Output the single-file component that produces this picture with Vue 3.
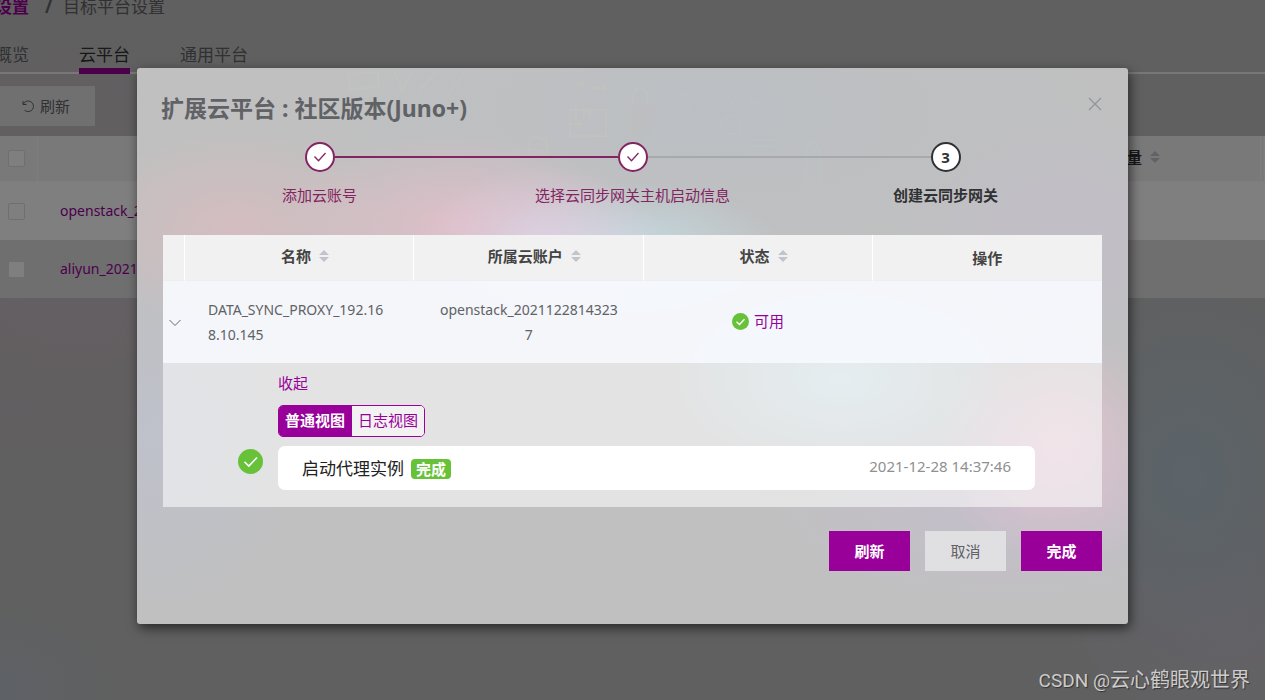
<script setup>
import { ref } from 'vue'

const tabs = ['概览', '云平台', '通用平台']
const platforms = ['openstack_20211228', 'aliyun_20211228']
const steps = [
  { title: '添加云账号', state: 'done' },
  { title: '选择云同步网关主机启动信息', state: 'last-done' },
  { title: '创建云同步网关', state: 'current' }
]
const view = ref('normal')
</script>

<template>
  <div class="app">
    <main class="page">
      <nav class="crumbs">
        <a href="#">设置</a><span class="slash">/</span><span>目标平台设置</span>
      </nav>
      <nav class="tabs">
        <a v-for="tab in tabs" :key="tab" href="#" :class="{ active: tab === '云平台' }">{{ tab }}</a>
      </nav>
      <button class="reload" type="button">
        <svg width="14" height="14" viewBox="0 0 14 14" fill="none" stroke="currentColor">
          <path d="M2 2v3.500h3.500M2.300 5.200A5.300 5.300 0 1 1 3.600 11.200" />
        </svg>
        刷新
      </button>
      <table class="list">
        <thead>
          <tr>
            <th class="pick"><input type="checkbox" aria-label="all" /></th>
            <th></th>
            <th class="amount">
              <span class="sortable">量
                <svg class="sort" width="10" height="12" viewBox="0 0 10 12"><path d="M0 5 5 0l5 5zM0 7h10l-5 5z" /></svg>
              </span>
            </th>
            <th class="edge"></th>
          </tr>
        </thead>
        <tbody>
          <tr v-for="name in platforms" :key="name">
            <td class="pick"><input type="checkbox" :aria-label="name" /></td>
            <td class="link"><a href="#">{{ name }}</a></td>
            <td></td>
            <td></td>
          </tr>
        </tbody>
      </table>
    </main>

    <div class="mask">
      <section class="dialog" role="dialog" aria-labelledby="dialog-title">
        <svg class="doodles" width="640" height="140" viewBox="0 0 640 140" fill="none" stroke-width="2">
          <g stroke="#c9c8bd">
            <path d="M0 4l30-2v14l-28 4zM46 0l8 20 10-18M70 22L90 0M100 24l18-22" />
            <path d="M226 14h10l-4-4m4 4-4 4M246 18h12l-4-4m4 4-4 4M222 40h36v26h-36zM228 34v18M236 48v-10l6 10V38M222 54h12l-4-4m4 4-4 4" />
            <path d="M182 66l17 4v12l-18-3zM285 36c-4-24 18-24 14 0" />
          </g>
          <path fill="#c4bcbd" opacity=".6" d="M280 34h28l-4 32h-22z" />
          <g stroke="#bac9ca">
            <path d="M330 22l12 6M336 40l8-6M380 26l4 8 8-6M398 38l4-8 8 4M372 52l10-8 10 8v12h-18zM402 70h26M404 76h22M458 90c0-24 14-24 14 0v24h-14z" />
          </g>
        </svg>
        <header class="head">
          <h2 id="dialog-title">扩展云平台 : 社区版本(Juno+)</h2>
          <button class="close" type="button" aria-label="close">
            <svg width="14" height="14" viewBox="0 0 14 14" fill="none" stroke="currentColor" stroke-width="1.200"><path d="m1 1 12 12M13 1 1 13" /></svg>
          </button>
        </header>

        <ol class="steps">
          <li v-for="(step, i) in steps" :key="step.title" :class="step.state">
            <span class="dot">
              <svg v-if="i < 2" width="14" height="12" viewBox="0 0 14 12" fill="none" stroke="currentColor" stroke-width="1.300"><path d="m1.500 5.500 4 4.200L12.500 2" /></svg>
              <template v-else>{{ i + 1 }}</template>
            </span>
            <span>{{ step.title }}</span>
          </li>
        </ol>

        <table class="grid">
          <thead>
            <tr>
              <th class="toggle"></th>
              <th v-for="col in ['名称', '所属云账户', '状态']" :key="col" class="sorts">
                <span class="sortable shifted">{{ col }}
                  <svg class="sort" width="10" height="12" viewBox="0 0 10 12"><path d="M0 5 5 0l5 5zM0 7h10l-5 5z" /></svg>
                </span>
              </th>
              <th>操作</th>
            </tr>
          </thead>
          <tbody>
            <tr class="row">
              <td class="toggle">
                <button class="chevron" type="button" aria-label="toggle">
                  <svg width="12" height="8" viewBox="0 0 12 8" fill="none" stroke="currentColor"><path d="m.500 1 5.500 5.500L11.500 1" /></svg>
                </button>
              </td>
              <td class="name">DATA_SYNC_PROXY_192.168.10.145</td>
              <td>openstack_20211228143237</td>
              <td>
                <span class="status">
                  <svg width="17" height="17" viewBox="0 0 17 17"><circle cx="8.500" cy="8.500" r="8.500" fill="#67c23a" /><path d="m4.500 8.700 3 2.800 5-5.300" fill="none" stroke="#fff" stroke-width="1.400" /></svg>
                  <a href="#">可用</a>
                </span>
              </td>
              <td></td>
            </tr>
            <tr class="detail">
              <td colspan="5">
                <div class="log">
                  <a class="fold" href="#">收起</a>
                  <div class="switch">
                    <button type="button" :class="{ on: view === 'normal' }" @click="view = 'normal'">普通视图</button>
                    <button type="button" :class="{ on: view === 'log' }" @click="view = 'log'">日志视图</button>
                  </div>
                  <div class="entry">
                    <svg class="mark" width="25" height="25" viewBox="0 0 25 25"><circle cx="12.500" cy="12.500" r="12.500" fill="#67c23a" /><path d="m6.500 12.800 4.300 4.200 8.200-8.500" fill="none" stroke="#fff" stroke-width="1.600" /></svg>
                    <div class="card">
                      <span class="task">启动代理实例</span>
                      <span class="tag">完成</span>
                      <time>2021-12-28 14:37:46</time>
                    </div>
                  </div>
                </div>
              </td>
            </tr>
          </tbody>
        </table>

        <footer class="foot">
          <button class="btn primary" type="button">刷新</button>
          <button class="btn" type="button">取消</button>
          <button class="btn primary" type="button">完成</button>
        </footer>
      </section>
    </div>
    <div class="watermark"><span>CSDN @</span>云心鹤眼观世界</div>
  </div>
</template>

<style>
body {
  margin: 0;
}
</style>

<style scoped>
.app {
  position: relative;
  min-height: 100vh;
  overflow: hidden;
  box-sizing: border-box;
  color: #606266;
  font: 15px/24px "Noto Sans", "Noto Sans CJK SC", sans-serif;
  background:
    radial-gradient(ellipse 160px 200px at 94% 68%, rgba(180, 204, 220, 0.7), transparent),
    radial-gradient(ellipse 300px 240px at 6% 36%, rgba(207, 188, 200, 0.7), transparent),
    radial-gradient(ellipse 120px 80px at 0% 98%, rgba(188, 196, 208, 0.8), transparent),
    radial-gradient(ellipse 200px 120px at 97% 90%, rgba(202, 196, 208, 0.8), transparent),
    #c0c0c0;
}
.app * {
  box-sizing: border-box;
}
a {
  color: #909;
  text-decoration: none;
}
button {
  font: inherit;
  cursor: pointer;
}
table {
  width: 100%;
  border-collapse: separate;
  border-spacing: 0;
  table-layout: fixed;
}
th,
td {
  padding: 0;
}
input[type="checkbox"] {
  appearance: none;
  display: block;
  width: 17px;
  height: 17px;
  margin: 0 0 0 8px;
  border: 1px solid #dcdfe6;
  border-radius: 2px;
  background: #fff;
}

/* page behind the dialog */
.crumbs {
  height: 27px;
  margin-left: -5px;
  font-size: 17px;
  line-height: 14px;
}
.crumbs a {
  font-weight: 700;
}
.slash {
  margin: 0 11px 0 16px;
  font-weight: 700;
}
.tabs {
  display: flex;
  gap: 50px;
  height: 47px;
  padding-top: 16px;
  border-bottom: 2px solid #f0f0f0;
  font-size: 17px;
}
.tabs a {
  height: 31px;
  color: #606266;
}
.tabs a:first-child {
  margin-left: -5px;
}
.tabs .active {
  color: #303133;
  border-bottom: 6px solid #909;
}
.reload {
  display: flex;
  align-items: center;
  gap: 5px;
  height: 40px;
  margin: 12px 0 10px;
  padding: 0 25px 0 21px;
  border: 0;
  color: #606266;
  background: #e0e0e2;
}
.list th {
  height: 46px;
  background: #f3f3f3;
  border-right: 1px solid #fcfcfc;
  border-bottom: 1px solid #fafafa;
  text-align: left;
  color: #303133;
}
.list td {
  height: 58px;
  background: #fff;
}
.list tr:nth-child(2) td {
  background: rgba(230, 230, 230, 0.8);
}
.list .pick {
  width: 38px;
}
.list .amount {
  width: 134px;
  padding-bottom: 4px;
}
.list .edge {
  width: 4px;
}
.link {
  padding-left: 22px;
  font-size: 14px;
}
.sortable {
  display: inline-flex;
  align-items: center;
  gap: 8px;
  line-height: 20px;
}
.sort {
  fill: #c0c4cc;
}

/* dialog */
.mask {
  position: absolute;
  inset: 0;
  padding: 68px 137px 76px;
  background: rgba(0, 0, 0, 0.5);
}
.dialog {
  position: relative;
  padding: 24px 26px 53px;
  border-radius: 3px;
  box-shadow: 2px 4px 12px rgba(0, 0, 0, 0.6);
  background:
    radial-gradient(ellipse 120px 80px at 41% 32%, rgba(226, 210, 230, 0.8), transparent),
    radial-gradient(ellipse 150px 70px at 50% 33%, rgba(198, 224, 232, 0.8), transparent),
    radial-gradient(ellipse 180px 90px at 32% 28%, rgba(230, 190, 202, 0.8), transparent),
    radial-gradient(ellipse 160px 100px at 10% 29%, rgba(218, 188, 192, 0.8), transparent),
    radial-gradient(ellipse 120px 120px at 93% 68%, rgba(232, 196, 210, 0.8), transparent),
    radial-gradient(ellipse 180px 100px at 71% 56%, rgba(198, 222, 230, 0.8), transparent),
    radial-gradient(ellipse 260px 110px at 88% 78%, rgba(198, 190, 208, 0.7), transparent),
    radial-gradient(ellipse 160px 190px at 2% 66%, rgba(190, 193, 208, 0.7), transparent),
    radial-gradient(ellipse 180px 140px at 94% 31%, rgba(194, 190, 202, 0.8), transparent),
    radial-gradient(ellipse 420px 160px at 58% 8%, rgba(184, 190, 197, 0.6), transparent),
    #c0c0c0;
}
.doodles {
  position: absolute;
  top: 2px;
  right: 140px;
  opacity: 0.35;
}
.head {
  position: relative;
  display: flex;
  justify-content: space-between;
  align-items: flex-start;
  height: 50px;
  margin-left: -2px;
}
h2 {
  margin: 0;
  font-size: 23px;
  line-height: 32px;
}
.close {
  display: flex;
  margin-top: 5px;
  padding: 0;
  border: 0;
  color: #909399;
  background: none;
}
.steps {
  position: relative;
  display: grid;
  grid-template-columns: repeat(3, 1fr);
  margin: 0;
  padding: 0;
  list-style: none;
}
.steps li {
  position: relative;
  display: flex;
  flex-direction: column;
  align-items: center;
  gap: 11px;
  height: 93px;
  color: #832561;
}
.steps li:not(:last-child)::after {
  content: "";
  position: absolute;
  top: 14px;
  left: calc(50% + 15px);
  width: calc(100% - 30px);
  height: 2px;
  background: #a8a9ac;
}
.steps .done::after {
  background: #832561 !important;
}
.steps .current {
  color: #303133;
  font-weight: 700;
}
.dot {
  display: flex;
  align-items: center;
  justify-content: center;
  width: 30px;
  height: 30px;
  border: 2px solid;
  border-radius: 50%;
  background: #fff;
}
.grid {
  position: relative;
}
.grid th {
  height: 46px;
  border-right: 1px solid #fff;
  border-bottom: 1px solid #ebeef5;
  color: #444;
  background: #f1f1f1;
}
.grid .sorts {
  padding-bottom: 4px;
}
.grid th:last-child {
  border-right: 0;
}
.grid .toggle {
  width: 22px;
  padding: 0;
}
.shifted {
  margin-left: 12px;
}
.row td {
  padding: 16px 23px;
  font-size: 14px;
  line-height: 25px;
  text-align: center;
  word-break: break-all;
  background: rgba(248, 251, 255, 0.92);
}
.row .name {
  text-align: left;
}
.chevron {
  display: flex;
  margin: 2px 0 0 6px;
  padding: 0;
  border: 0;
  color: #666;
  background: none;
}
.status {
  display: inline-flex;
  align-items: center;
  gap: 5px;
  padding-top: 2px;
  font-size: 15px;
}
.detail td {
  background: rgba(255, 255, 255, 0.55);
}
.log {
  padding: 8px 67px 17px 75px;
}
.fold {
  display: block;
  margin-left: 40px;
}
.switch {
  display: inline-flex;
  margin: 10px 0 9px 40px;
  height: 32px;
  overflow: hidden;
  border: 1px solid #909;
  border-radius: 5px;
  vertical-align: top;
}
.switch button {
  padding: 0 6px 2px;
  border: 0;
  color: #909;
  background: #f2f2f2;
}
.switch .on {
  padding-right: 7px;
  color: #fff;
  font-weight: 700;
  background: #909;
}
.entry {
  display: flex;
  gap: 15px;
}
.mark {
  margin-top: 3px;
}
.card {
  display: flex;
  flex: 1;
  align-items: center;
  gap: 7px;
  height: 44px;
  padding: 2px 24px 0;
  border-radius: 7px;
  background: #fff;
}
.task {
  color: #222;
  font-size: 17px;
}
.tag {
  padding: 0 5px;
  border-radius: 4px;
  color: #fff;
  font-weight: 700;
  line-height: 20px;
  background: #67c23a;
}
time {
  margin-left: auto;
  padding-bottom: 6px;
  color: #909090;
}
.foot {
  display: flex;
  justify-content: flex-end;
  gap: 15px;
  margin-top: 24px;
}
.btn {
  width: 81px;
  height: 40px;
  padding: 0;
  border: 0;
  color: #606266;
  background: #e0e0e2;
}
.btn.primary {
  color: #fff;
  font-weight: 700;
  background: #909;
}
.watermark {
  position: absolute;
  right: 15px;
  bottom: 7px;
  color: #ccc;
  font: 20px/24px Roboto, "Noto Sans CJK SC", sans-serif;
  text-shadow: 1px 1px 1px #333;
}
.watermark span {
  font-size: 19px;
}
</style>
